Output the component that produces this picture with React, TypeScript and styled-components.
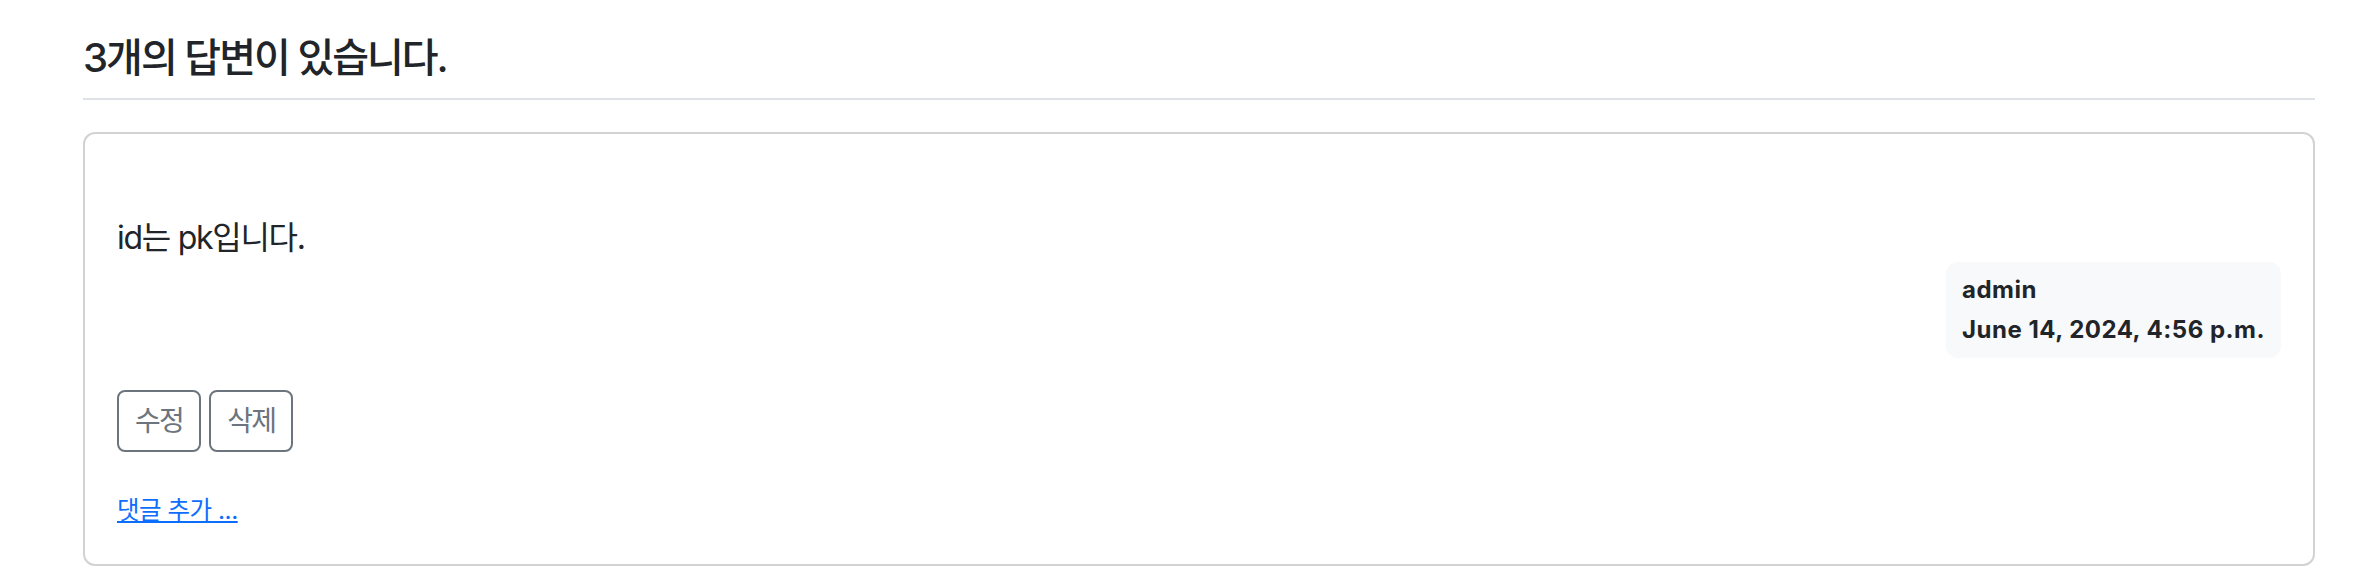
import React from "react";
import styled, { createGlobalStyle } from "styled-components";

const Global = createGlobalStyle`
  html, body { margin: 0; padding: 0; background: #fff; }
  body {
    font-family: Inter, "Noto Sans CJK KR", sans-serif;
    color: #212529;
    font-size: 32px;
    line-height: 1.5;
  }
`;

const Page = styled.div`
  padding: 18px 61px 0 83px;
`;

const Heading = styled.h5`
  margin: 0 0 32px;
  padding: 16px 0;
  font-size: 40px;
  font-weight: 500;
  line-height: 1.2;
  letter-spacing: -0.05em;
  border-bottom: 2px solid #dee2e6;
`;

const Card = styled.div`
  border: 2px solid rgba(0, 0, 0, 0.175);
  border-radius: 12px;
  padding: 32px;
`;

const Content = styled.div`
  white-space: pre-line;
  letter-spacing: -0.04em;
`;

const MetaRow = styled.div`
  display: flex;
  justify-content: flex-end;
`;

const Badge = styled.div`
  background: #f8f9fa;
  color: #212529;
  border-radius: 12px;
  padding: 16px;
  font-size: 24px;
  font-weight: 700;
  line-height: 1;
  letter-spacing: 0.5px;
`;

const BadgeLine = styled.div<{ $gap?: boolean }>`
  margin-bottom: ${(p) => (p.$gap ? "16px" : "0")};
`;

const Actions = styled.div`
  display: flex;
  gap: 8px;
  margin: 32px 0;
`;

const Button = styled.button`
  font-family: inherit;
  font-size: 28px;
  line-height: 1.5;
  letter-spacing: -0.06em;
  padding: 8px 16px;
  color: #6c757d;
  background: transparent;
  border: 2px solid #6c757d;
  border-radius: 8px;
`;

const Footer = styled.div``;

const Link = styled.a`
  color: #0d6efd;
  font-size: 24.5px;
  letter-spacing: -0.02em;
  text-decoration: underline;
`;

export default function App() {
  return (
    <>
      <Global />
      <Page>
        <Heading>3개의 답변이 있습니다.</Heading>
        <Card>
          <Content>{"\nid는 pk입니다."}</Content>
          <MetaRow>
            <Badge>
              <BadgeLine $gap>admin</BadgeLine>
              <BadgeLine>June 14, 2024, 4:56 p.m.</BadgeLine>
            </Badge>
          </MetaRow>
          <Actions>
            <Button>수정</Button>
            <Button>삭제</Button>
          </Actions>
          <Footer>
            <Link href="#">댓글 추가 ...</Link>
          </Footer>
        </Card>
      </Page>
    </>
  );
}
